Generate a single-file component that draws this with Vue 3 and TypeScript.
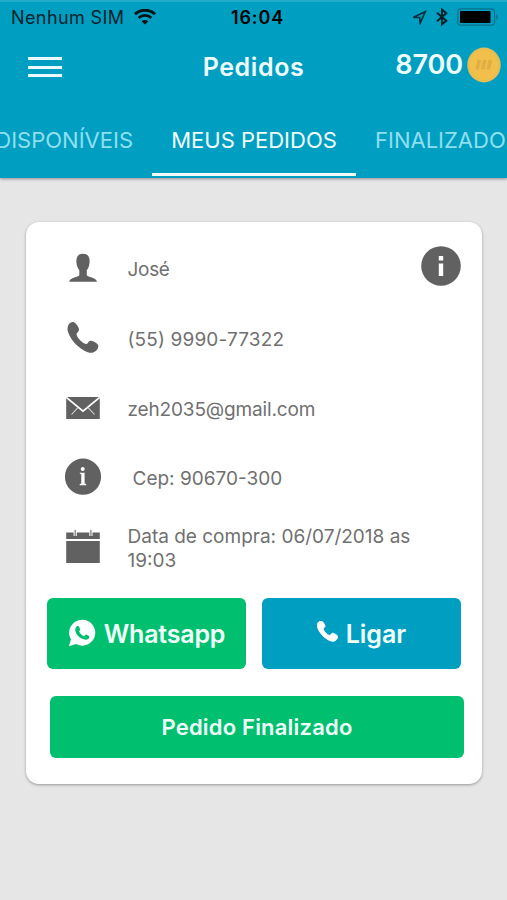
<script setup lang="ts">
type IconName = 'person' | 'phone' | 'mail' | 'info' | 'calendar'

interface DetailRow {
  icon: IconName
  text: string
}

const rows: DetailRow[] = [
  { icon: 'person', text: 'José' },
  { icon: 'phone', text: '(55) 9990-77322' },
  { icon: 'mail', text: 'zeh2035@gmail.com' },
  { icon: 'info', text: 'Cep: 90670-300' },
  { icon: 'calendar', text: 'Data de compra: 06/07/2018 as 19:03' },
]
</script>

<template>
  <div class="screen">
    <header class="header">
      <div class="status">
        <div class="status-left">
          <span class="carrier">Nenhum SIM</span>
          <svg class="wifi" width="22" height="16" viewBox="0 0 22 16" fill="none" stroke="#041418">
            <path d="M1 5.100C6.600-.1 15.400-.1 21 5.100" stroke-width="3" />
            <path d="M4.600 9C8.300 5.500 13.700 5.500 17.400 9" stroke-width="2.800" />
            <path d="M11 15.700L7.700 12.200C9.500 10.600 12.500 10.600 14.300 12.200Z" fill="#041418" stroke="none" />
          </svg>
        </div>
        <span class="clock">16:04</span>
        <div class="status-right">
          <svg width="15" height="15" viewBox="0 0 15 15" fill="none" stroke="#06303a" stroke-width="1.700" stroke-linejoin="miter">
            <path d="M1.400 7.300L13.200 1.800L8.200 13L7.600 7.500Z" />
          </svg>
          <svg class="bluetooth" width="12" height="18" viewBox="0 0 12 18" fill="none" stroke="#041f27" stroke-width="1.900">
            <path d="M1 4.700L10.300 12.700L6 16.300V1.500L10.300 5.200L1 13.200" />
          </svg>
          <svg width="42" height="18" viewBox="0 0 42 18">
            <rect x=".8" y=".8" width="36.800" height="16.400" rx="3.500" fill="none" stroke="#08708a" stroke-width="1.200" />
            <rect x="3" y="3" width="30.500" height="12" rx=".8" fill="#000" />
            <path d="M39.300 6V12Q41 11.200 41 9T39.300 6Z" fill="#08708a" />
          </svg>
        </div>
      </div>

      <div class="navbar">
        <button class="menu" aria-label="Menu"><i /><i /><i /></button>
        <h1 class="title">Pedidos</h1>
        <div class="balance">
          <span>8700</span>
          <svg width="34" height="36" viewBox="0 0 34 36">
            <ellipse cx="17" cy="18" rx="16.700" ry="17.400" fill="#e7bd52" />
            <ellipse cx="17" cy="18" rx="14.400" ry="15" fill="#f2c04a" />
            <path d="M12.500 13L10 22.500M18 13L15.500 22.500M23.500 13L21 22.500" stroke="#dfae45" stroke-width="3.600" />
          </svg>
        </div>
      </div>

      <nav class="tabs">
        <a class="tab first">DISPONÍVEIS</a>
        <a class="tab active">MEUS PEDIDOS</a>
        <a class="tab last">FINALIZADOS</a>
      </nav>
    </header>

    <main class="card">
      <div class="details">
        <div v-for="row in rows" :key="row.icon" class="row">
          <svg v-if="row.icon === 'person'" class="icon" viewBox="0 0 40 40">
            <path d="M20 5.700C15 5.700 13.100 9 13.400 14C13.600 18 15 20.500 16.300 22.300V27.300C15 29.500 7.500 29 6.200 33.700H34C32.500 29 25.200 29.500 23.800 27.300V22.300C25.200 20.500 26.400 18 26.600 14C26.900 9 25 5.700 20 5.700Z" />
          </svg>
          <svg v-else-if="row.icon === 'phone'" class="icon" viewBox="0 0 40 40">
            <path d="M7.500 4.700C9.500 3.500 11.500 4.100 12.800 5.700C15 8.300 16.300 10.500 16 12C15.800 13.900 13.400 14.900 13.500 16.600C14 19.800 19.600 25.400 22.900 26.100C24.700 26.200 25.200 23.200 27.300 22.700C29.400 22.400 32.300 24.200 34.400 26C36 27.600 35.500 30 33.800 32C30.300 35.800 26.500 35.500 21 32.500C13.500 28.300 7.500 21.300 5.200 14.500C3.900 10.500 4.400 6.800 7.500 4.700Z" />
          </svg>
          <svg v-else-if="row.icon === 'mail'" class="icon" viewBox="0 0 40 40">
            <rect x="3.200" y="9" width="33.600" height="22" />
            <path d="M3.300 9.400L20 23.200L36.700 9.400" fill="none" stroke="#fff" stroke-width="1.800" />
            <path d="M15 19.500L8.500 26.500M25 19.500L31.500 26.500" fill="none" stroke="#ddd" stroke-width="1.100" />
          </svg>
          <svg v-else-if="row.icon === 'info'" class="icon" viewBox="0 0 40 40">
            <circle cx="20" cy="19.700" r="18.100" />
            <circle cx="19.700" cy="12.100" r="2" fill="#fff" />
            <path d="M16.800 15.700H21.600V26.600L23.200 27.100V28.200H16.700V27.100L18.300 26.600V17.200L16.800 16.700Z" fill="#fff" />
          </svg>
          <svg v-else class="icon" viewBox="0 0 40 40">
            <path d="M3.200 5.400H36.800V11.900H3.200ZM3.200 14H36.800V36H3.200Z" />
            <path d="M12.200 3V9M27.900 3V9" stroke="#fff" stroke-width="3.200" />
            <path d="M12.200 2.800V9.200M27.900 2.800V9.200" stroke="#777" stroke-width="1.200" />
          </svg>
          <span class="text" :class="row.icon">{{ row.text }}</span>
          <button v-if="row.icon === 'person'" class="more" aria-label="Info">
            <svg width="40" height="40" viewBox="0 0 40 40">
              <circle cx="20" cy="20" r="19.800" fill="#616161" />
              <path d="M17.800 10H22.200V14.400H17.800ZM17.800 17.500H22.200V30H17.800Z" fill="#fff" />
            </svg>
          </button>
        </div>
      </div>

      <div class="actions">
        <button class="btn green">
          <svg width="28" height="28" viewBox="0 0 28 28">
            <path d="M14.200.7A13 13 0 0 0 3 20.400L.8 27.300L8 25.100A13 13 0 1 0 14.200.7Z" fill="#fff" />
            <path d="M9.300 7.100C10.100 6.700 10.800 6.900 11.100 7.700L12.100 10.200C12.400 11 11 12 11.100 12.500C12.200 14.800 13.700 16.300 16 17.200C16.700 17.300 17.400 15.600 18.200 15.600L21 17C21.700 17.400 21.300 19.100 20.300 20C18.500 21.300 16 20.700 13.200 19.300C10.500 17.700 8.500 15.300 7.500 12.700C6.900 10.500 7.400 8.200 9.300 7.100Z" fill="#00bf6f" />
          </svg>
          <span class="wa">Whatsapp</span>
        </button>
        <button class="btn blue">
          <svg class="call" width="21" height="21" viewBox="4 4 32 32">
            <path fill="#fff" stroke="#fff" stroke-width="1.500" d="M7.500 4.700C9.500 3.500 11.500 4.100 12.800 5.700C15 8.300 16.300 10.500 16 12C15.800 13.900 13.400 14.900 13.500 16.600C14 19.800 19.600 25.400 22.900 26.100C24.700 26.200 25.200 23.200 27.300 22.700C29.400 22.400 32.300 24.200 34.400 26C36 27.600 35.500 30 33.800 32C30.300 35.800 26.500 35.500 21 32.500C13.500 28.300 7.500 21.300 5.200 14.500C3.900 10.500 4.400 6.800 7.500 4.700Z" />
          </svg>
          <span>Ligar</span>
        </button>
      </div>
      <button class="btn green finish">Pedido Finalizado</button>
    </main>
  </div>
</template>

<style>
body {
  background: #e6e6e6;
}
</style>

<style scoped>
.screen {
  width: 507px;
  height: 900px;
  overflow: hidden;
  background: #e6e6e6;
  font-family: Inter, "Liberation Sans", sans-serif;
}
.screen * {
  box-sizing: border-box;
}
button {
  border: 0;
  padding: 0;
  background: none;
  font-family: inherit;
}
svg {
  display: block;
  flex: none;
}
.header {
  height: 178px;
  background: #009fc2;
  border-top: 2px solid #21aaca;
  box-shadow: 0 1px 3px rgba(0, 0, 0, 0.4);
}
.status {
  display: grid;
  grid-template-columns: 1fr auto 1fr;
  align-items: center;
  height: 30px;
  padding: 0 8px 0 11px;
  color: #04222a;
}
.navbar {
  display: grid;
  grid-template-columns: 1fr auto 1fr;
  align-items: center;
  height: 70px;
  padding: 0 6px;
}
.status-left,
.status-right {
  display: flex;
  align-items: center;
}
.status-left {
  gap: 10px;
}
.carrier {
  font-size: 18px;
  letter-spacing: 0.4px;
}
.clock {
  font-size: 18px;
  font-weight: 600;
  letter-spacing: 0.9px;
  margin-left: 5px;
  color: #000;
}
.status-right {
  justify-content: flex-end;
}
.bluetooth {
  margin: 0 9px;
}
.menu {
  display: flex;
  flex-direction: column;
  justify-content: space-between;
  width: 34px;
  height: 20px;
  margin-left: 22px;
}
.menu i {
  height: 3px;
  background: #e9fbff;
}
.title {
  margin: 0;
  color: #eefcff;
  font-size: 25px;
  font-weight: 600;
  letter-spacing: 0.6px;
  line-height: 30px;
}
.balance {
  display: flex;
  align-items: center;
  justify-content: flex-end;
  gap: 4px;
  margin-top: -5px;
  color: #eefcff;
  font-size: 27px;
  font-weight: 600;
  letter-spacing: -0.1px;
}
.balance svg {
  margin-bottom: -1px;
}
.tabs {
  display: flex;
  height: 74px;
  font-size: 22px;
  line-height: 77px;
  color: #8fdff0;
  white-space: nowrap;
}
.tab {
  flex: none;
  width: 204px;
  height: 74px;
  text-align: center;
}
.first {
  width: 152px;
  direction: rtl;
  padding-right: 19px;
}
.active {
  color: #f3fdff;
  border-bottom: 3px solid #f4fbfc;
}
.last {
  width: 151px;
  padding-left: 19px;
  overflow: hidden;
  text-align: left;
}
.card {
  width: 456px;
  height: 562px;
  margin: 44px 0 0 26px;
  padding: 11.5px 18px 0 21px;
  border-radius: 13px;
  background: #fff;
  box-shadow: 0 1px 3px rgba(0, 0, 0, 0.35);
}
.details {
  display: grid;
  grid-auto-rows: 69.7px;
}
.row {
  display: flex;
  align-items: center;
  padding-left: 16px;
}
.icon {
  width: 40px;
  height: 40px;
  fill: #616161;
}
.text {
  width: 300px;
  margin-left: 24.5px;
  padding-top: 4px;
  color: #707070;
  font-size: 19px;
  line-height: 24px;
}
.text.person {
  letter-spacing: -0.3px;
}
.text.phone {
  letter-spacing: 0.15px;
}
.text.mail {
  letter-spacing: -0.15px;
}
.text.info {
  padding-left: 5px;
}
.more {
  margin: 0 0 4px -7px;
}
.actions {
  display: flex;
  gap: 16px;
  margin-top: 16px;
}
.btn {
  display: flex;
  align-items: center;
  justify-content: center;
  width: 199px;
  height: 71px;
  border-radius: 6px;
  color: #f0fff9;
  font-size: 25px;
  font-weight: 600;
}
.btn span {
  padding-top: 2px;
}
.wa {
  letter-spacing: -0.2px;
}
.green {
  background: #00bf6f;
}
.blue {
  background: #009fc2;
}
.btn svg {
  margin-right: 8px;
}
.btn .call {
  margin-bottom: 3px;
}
.finish {
  width: 414px;
  height: 62px;
  margin: 27px 0 0 3px;
  font-size: 22px;
  letter-spacing: 0.2px;
}
</style>
